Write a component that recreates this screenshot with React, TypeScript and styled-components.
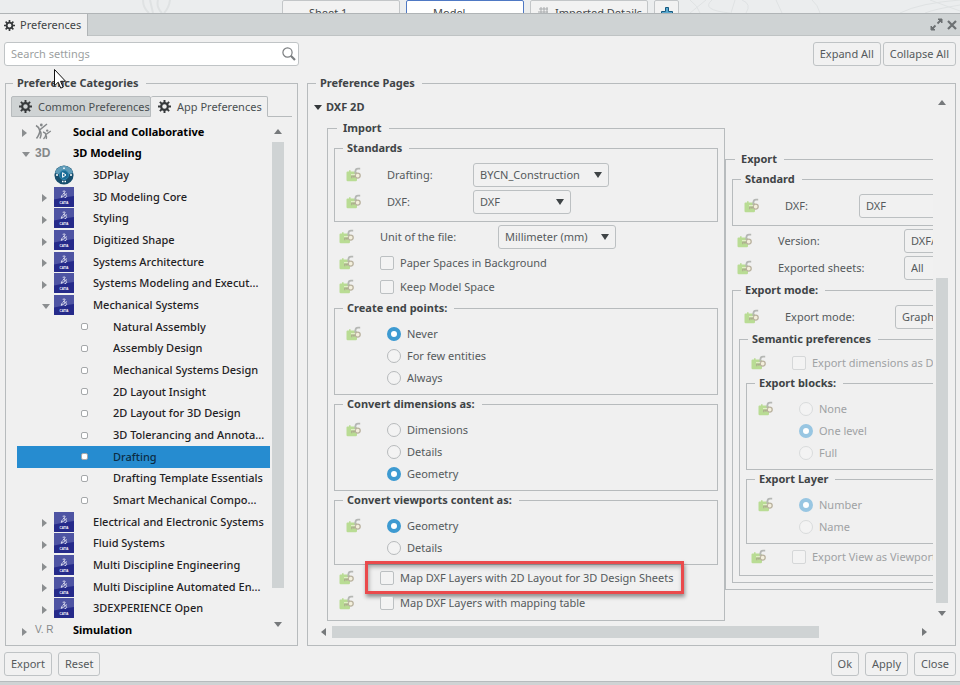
import React, { useId, useState } from "react";
import styled, { createGlobalStyle, css } from "styled-components";

const GlobalStyle = createGlobalStyle`
  *, *::before, *::after { box-sizing: border-box; }
  body {
    margin: 0;
    background: #f0f0f0;
    color: #555a5c;
    font: 11px/16px "Noto Sans", "Open Sans", sans-serif;
  }
  button, input, select { font: inherit; color: inherit; }
`;

const line = "#b7bbbd";
const bar = "#cfd3d4";

/* ---------- page frame ---------- */

const Page = styled.div`
  position: relative;
  display: flex;
  flex-direction: column;
  min-height: 100vh;
  overflow: hidden;
`;

const SheetStrip = styled.div`
  position: relative;
  display: flex;
  gap: 6px;
  height: 13px;
  padding-left: 282px;
  overflow: hidden;
  background: #ebedee;
`;

const Watermark = styled.svg`
  position: absolute;
  inset: 0;
  width: 100%;
  height: 13px;
`;

const SheetTab = styled.button<{ $active?: boolean; $small?: boolean }>`
  position: relative;
  display: flex;
  flex: none;
  align-items: center;
  justify-content: ${(p) => (p.$small ? "center" : "flex-start")};
  gap: 6px;
  width: ${(p) => (p.$small ? 25 : 118)}px;
  height: 25px;
  padding: 0 0 0 ${(p) => (p.$small ? 0 : 26)}px;
  border: 1px solid ${(p) => (p.$active ? "#4f79c4" : "#c3c6c8")};
  border-radius: 2px;
  background: ${(p) => (p.$active ? "#fff" : "#f2f2f2")};
  color: #44484a;
  white-space: nowrap;
`;

const IconTab = styled(SheetTab)`
  padding-left: 6px;
`;

const TitleBar = styled.header`
  display: flex;
  align-items: stretch;
  height: 23px;
  border-top: 1px solid #b0b4b6;
  border-bottom: 1px solid #bfc3c4;
  background: ${bar};
`;

const TitleTab = styled.h1`
  display: flex;
  align-items: center;
  gap: 5px;
  margin: 0 auto -1px 0;
  padding: 0 6px 0 4px;
  border-right: 1px solid #b0b4b6;
  background: #f0f0f0;
  font-size: 11px;
  font-weight: 400;
  color: #3f4446;
`;

const BarButton = styled.button`
  display: flex;
  align-items: center;
  justify-content: center;
  width: 16px;
  padding: 0;
  border: 0;
  background: none;
`;

const Toolbar = styled.div`
  display: flex;
  gap: 2px;
  padding: 6px 4px 8px;
`;

const SearchBox = styled.label`
  display: flex;
  align-items: center;
  flex: 0 1 295px;
  height: 24px;
  margin-right: auto;
  padding: 0 2px 0 6px;
  border: 1px solid #c0c4c6;
  border-radius: 3px;
  background: #fff;
`;

const SearchInput = styled.input`
  flex: 1;
  min-width: 0;
  padding: 0;
  border: 0;
  outline: 0;
  background: none;
  &::placeholder { color: #9c9fa1; opacity: 1; }
`;

const Button = styled.button`
  height: 24px;
  padding: 0 6px;
  border: 1px solid #bfc3c5;
  border-radius: 3px;
  background: #f1f1f1;
  white-space: nowrap;
`;

const Main = styled.main`
  display: grid;
  grid-template-columns: minmax(0, 293fr) minmax(0, 649fr);
  gap: 9px;
  flex: 1;
  padding: 0 4px 0 5px;
`;

const Footer = styled.footer`
  display: flex;
  gap: 6px;
  padding: 6px 4px;
  border-bottom: 3px solid ${bar};
  box-shadow: inset 0 -1px 0 #b7bbbd;
`;

const Spacer = styled.div`
  flex: 1;
`;

/* ---------- framed groups ---------- */

const Frame = styled.fieldset`
  display: flex;
  flex-direction: column;
  min-width: 0;
  margin: 0;
  padding: 0 6px 6px;
  border: 1px solid ${line};
`;

const Legend = styled.legend<{ $wide?: boolean }>`
  margin-left: ${(p) => (p.$wide ? 3 : 2)}px;
  padding: 0 7px 0 ${(p) => (p.$wide ? 6 : 4)}px;
  font-weight: 700;
  line-height: 18px;
  color: #3f4446;
`;

const CategoryFrame = styled(Frame)`
  padding: 4px 5px;
`;

const PagesFrame = styled(Frame)`
  padding: 0 7px 7px 6px;
`;

/* ---------- category tree ---------- */

const Tabs = styled.div`
  display: flex;
  height: 21px;
  &::after {
    content: "";
    flex: 1;
    border-bottom: 1px solid ${line};
  }
`;

const Tab = styled.button<{ $active?: boolean }>`
  display: flex;
  flex: none;
  align-items: center;
  gap: 6px;
  width: ${(p) => (p.$active ? 117 : 140)}px;
  padding: 0 0 0 7px;
  border: 1px solid ${line};
  border-left-width: ${(p) => (p.$active ? 0 : 1)}px;
  border-bottom-color: ${(p) => (p.$active ? "transparent" : line)};
  border-radius: 2px 2px 0 0;
  background: ${(p) => (p.$active ? "#f0f0f0" : bar)};
  color: #4a4f51;
  white-space: nowrap;
`;

const TreeArea = styled.div`
  display: flex;
  flex: 1;
  gap: 2px;
  padding: 4px 8px 0 6px;
`;

const Tree = styled.ul`
  display: grid;
  grid-auto-rows: minmax(20px, 1fr);
  flex: 1;
  min-width: 0;
  margin: 0;
  padding: 0;
  list-style: none;
`;

const TreeRow = styled.li<{ $level: number; $selected?: boolean }>`
  display: grid;
  grid-template-columns: ${(p) =>
    ["13px 40px", "14px 39px", "32px"][p.$level]} minmax(0, 1fr);
  align-items: center;
  padding-left: ${(p) => [3, 23, 64][p.$level]}px;
  overflow: hidden;
  background: ${(p) => (p.$selected ? "#268cd0" : "none")};
  color: ${(p) => (p.$selected ? "#0c2c44" : "#1f2224")};
  font-weight: 500;
  ${(p) => p.$level === 0 && css`font-weight: 700; color: #000;`}
`;

const TreeText = styled.span`
  overflow: hidden;
  text-overflow: ellipsis;
  white-space: nowrap;
`;

const TreeIcon = styled.span<{ $arrow?: boolean; $inset?: boolean }>`
  display: flex;
  align-items: center;
  padding-top: ${(p) => (p.$arrow ? 3 : 0)}px;
  margin-left: ${(p) => (p.$arrow || p.$inset ? 2 : 0)}px;
`;

const Leaf = styled.span`
  width: 7px;
  height: 7px;
  border: 1px solid #a5a8aa;
  border-radius: 2px;
  background: #fff;
`;

/* ---------- scroll bars ---------- */

const ScrollBar = styled.div<{ $across?: boolean; $end?: number }>`
  display: flex;
  flex-direction: ${(p) => (p.$across ? "row" : "column")};
  flex: none;
  width: ${(p) => (p.$across ? "auto" : "12px")};
  height: ${(p) => (p.$across ? "12px" : "auto")};
  padding-bottom: ${(p) => p.$end ?? 0}px;
`;

const ScrollButton = styled.button<{ $across?: boolean }>`
  display: flex;
  align-items: center;
  justify-content: center;
  flex: 0 0 ${(p) => (p.$across ? 18 : 21)}px;
  padding: 0;
  border: 0;
  background: none;
`;

const Thumb = styled.div<{ $size: number }>`
  flex: ${(p) => p.$size} 1 0;
  background: ${bar};
`;

const Gap = styled.div<{ $size: number }>`
  flex: ${(p) => p.$size} 1 0;
`;

/* ---------- preference page ---------- */

const PagesGrid = styled.div`
  display: grid;
  grid-template-columns: minmax(0, 1fr) 12px;
  grid-template-rows: minmax(0, 1fr) 12px;
  gap: 2px 3px;
  flex: 1;
`;

const Viewport = styled.div`
  min-width: 0;
  overflow: hidden;
`;

const SectionTitle = styled.h2`
  display: flex;
  align-items: center;
  gap: 4px;
  height: 24px;
  margin: 3px 0 0;
  font-size: 11px;
  font-weight: 700;
  color: #3f4446;
`;

const Columns = styled.div`
  display: grid;
  grid-template-columns: 398px 345px;
  align-items: start;
  padding-left: 13px;
`;

const ImportFrame = styled(Frame)`
  padding: 2px 6px 5px;
`;

const ExportFrame = styled(Frame)`
  margin-top: 31px;
  padding-top: 2px;
`;

const FieldFrame = styled(Frame)`
  padding: 4px 6px 6px;
`;

const RadioFrame = styled(Frame)`
  padding: 6px 6px 5px;
`;

const OpenFrame = styled(Frame)`
  padding-top: 4px;
`;

const Row = styled.div<{ $h: number }>`
  display: flex;
  align-items: center;
  height: ${(p) => p.$h}px;
  padding-left: 5px;
  white-space: nowrap;
`;

const LockSlot = styled.span`
  display: flex;
  flex: 0 0 41px;
`;

const FieldLabel = styled.label<{ $w: number }>`
  flex: 0 0 ${(p) => p.$w}px;
`;

const Dropdown = styled.span<{ $w: number }>`
  position: relative;
  display: flex;
  flex: 0 0 ${(p) => p.$w}px;
`;

const SelectBox = styled.select`
  appearance: none;
  width: 100%;
  height: 24px;
  padding: 1px 20px 0 6px;
  border: 1px solid #bcc0c2;
  border-radius: 3px;
  background: #f1f1f1;
`;

const DropMark = styled.svg`
  position: absolute;
  right: 7px;
  top: 9px;
  pointer-events: none;
`;

const Choice = styled.label`
  position: relative;
  display: flex;
  align-items: center;
  gap: 6px;
  &:has(input:disabled) { color: #9fa2a4; }
`;

const Check = styled.input`
  appearance: none;
  width: 14px;
  height: 14px;
  margin: 0;
  border: 1px solid #bcc0c2;
  border-radius: 2px;
  background: #f3f3f3;
  &:checked { background: #3d9ad1; }
  &:disabled { border-color: #d5d7d8; }
`;

const Radio = styled.input`
  appearance: none;
  width: 14px;
  height: 14px;
  margin: 0;
  border: 1px solid #b7babc;
  border-radius: 50%;
  background: #f3f3f3;
  &:checked { border: 4px solid #3d9ad1; background: #fff; }
  &:disabled { border-color: #d9dbdc; }
  &:disabled:checked { border-color: #98c6e2; }
`;

const Highlight = styled.span`
  position: absolute;
  inset: -9px -11px -8px -15px;
  border: 3px solid #ea4a4c;
  box-shadow: 1px 3px 4px rgba(0, 0, 0, 0.4), inset 1px 3px 4px rgba(0, 0, 0, 0.3);
  pointer-events: none;
`;

const After = styled.div`
  margin-top: 1px;
`;

const Pointer = styled.svg`
  position: absolute;
  left: 53px;
  top: 68px;
  pointer-events: none;
`;

/* ---------- drawings ---------- */

const Gear = ({ size = 12 }: { size?: number }) => (
  <svg width={size} height={size} viewBox="0 0 24 24" fill="none" stroke="#36393b" aria-hidden>
    <circle cx="12" cy="12" r="6.200" strokeWidth="4" />
    <g strokeWidth="3.600">
      <path d="M12 0v5M12 19v5M0 12h5M19 12h5M3.500 3.500l3.600 3.600M16.900 16.900l3.600 3.600M20.500 3.500l-3.600 3.600M7.100 16.900l-3.600 3.600" />
    </g>
  </svg>
);

const marks = {
  up: "0,5 4,0 8,5",
  down: "0,0 8,0 4,5",
  left: "5,0 0,4 5,8",
  right: "0,0 5,4 0,8",
};

const Mark = ({ dir, color = "#76797b" }: { dir: keyof typeof marks; color?: string }) => {
  const tall = dir === "left" || dir === "right";
  return (
    <svg width={tall ? 5 : 8} height={tall ? 8 : 5} aria-hidden>
      <polygon points={marks[dir]} fill={color} />
    </svg>
  );
};

const Lock = () => (
  <svg width="16" height="16" viewBox="0 0 16 16" fill="none" aria-hidden>
    <path d="M0.500 5.500q0-1 1-1h1.500v-1.200h1.600v1.200h5l1.400 1v7.500q0 1.200-1.200 1.200H1.700q-1.200 0-1.200-1.200z" fill="#b9dc94" />
    <path d="M9.400 7V4.200Q9.600 1.600 12 1.600h2.200" stroke="#b5b7b4" strokeWidth="1.800" />
    <circle cx="11.700" cy="8.600" r="2.500" fill="#f3efdc" stroke="#b9b29f" strokeWidth="1.300" />
    <path d="M9.500 9H5.200M5.800 9v2.200M7.900 9v1.800" stroke="#aaa68c" strokeWidth="1.100" />
    <path d="M5 7.700h4.200" stroke="#eaf3d2" strokeWidth="1" />
  </svg>
);

const Catia = () => (
  <svg width="20" height="20" viewBox="0 0 20 20" aria-hidden>
    <rect width="20" height="20" rx="0.500" fill="#252a8a" />
    <path d="M0 0h20v9Q10 10 0 12.500z" fill="#4e54a3" />
    <g fill="none" stroke="#e6e7f4" strokeWidth="0.900">
      <path d="M8.700 4.300q3-.9 2.400.5-.4 1-1.900 1.700 2.300-.3 1.600 1.400-.7 1.500-3.600 2.500.2-1.700 1.600-3" />
      <path d="M12.900 6.800q-1.700 0-1.300 1 .9 1 1 1.700-.2 1.200-2 1" />
    </g>
    <text x="10" y="17" textAnchor="middle" fill="#fff" fontSize="3" fontWeight="700" fontFamily="Liberation Sans, sans-serif">CATIA</text>
  </svg>
);

const Play = () => (
  <svg width="20" height="20" viewBox="0 0 20 20" aria-hidden>
    <circle cx="10" cy="10" r="9.600" fill="#174e6d" />
    <path d="M1 8a9.200 9.200 0 0 1 18 0Q10 12 1 8z" fill="#5e9bb8" />
    <circle cx="10" cy="10" r="4.600" fill="#1a6c96" stroke="#2f86ad" />
    <path d="M8.600 7.700v4.600l3.400-2.300z" fill="none" stroke="#fff" />
    <path d="M2 10h2M16 10h2M8 16.500h1.500M10.500 16.500H12M10 2.500v1.500" stroke="#fff" strokeWidth="1.500" />
  </svg>
);

const People = () => (
  <svg width="17" height="17" viewBox="0 0 17 17" fill="none" stroke="#85888a" aria-hidden>
    <path d="M1 2.500q3 1.500 3.500 4.500L12 1M4.800 6.500q.5 4-3.300 9M5 8q2.200 2.500 0 7.500" strokeWidth="1.500" />
    <path d="M8 9q2.500.5 2.800 2.500l5-3.500M10.800 11.500q0 2-2.300 4.500M11 12q1 1.500.2 4" strokeWidth="1.300" />
    <circle cx="6.300" cy="2" r="1.400" fill="#85888a" stroke="none" />
    <circle cx="12.200" cy="7.600" r="1.200" fill="#85888a" stroke="none" />
  </svg>
);

const IconWord = styled.span`
  color: #85888a;
  font: 700 12px/14px "Liberation Sans Narrow", "Liberation Sans", sans-serif;
  white-space: nowrap;
`;

const FadedWord = styled(IconWord)`
  font-size: 10px;
  font-weight: 400;
`;

/* ---------- data ---------- */

type Node = {
  text: string;
  level: 0 | 1 | 2;
  open?: boolean;
  icon?: React.ReactNode;
  noArrow?: boolean;
};

const nodes: Node[] = [
  { text: "Social and Collaborative", level: 0, icon: <People /> },
  { text: "3D Modeling", level: 0, open: true, icon: <IconWord>3D</IconWord> },
  { text: "3DPlay", level: 1, icon: <Play />, noArrow: true },
  { text: "3D Modeling Core", level: 1 },
  { text: "Styling", level: 1 },
  { text: "Digitized Shape", level: 1 },
  { text: "Systems Architecture", level: 1 },
  { text: "Systems Modeling and Execut...", level: 1 },
  { text: "Mechanical Systems", level: 1, open: true },
  { text: "Natural Assembly", level: 2 },
  { text: "Assembly Design", level: 2 },
  { text: "Mechanical Systems Design", level: 2 },
  { text: "2D Layout Insight", level: 2 },
  { text: "2D Layout for 3D Design", level: 2 },
  { text: "3D Tolerancing and Annota...", level: 2 },
  { text: "Drafting", level: 2 },
  { text: "Drafting Template Essentials", level: 2 },
  { text: "Smart Mechanical Compo...", level: 2 },
  { text: "Electrical and Electronic Systems", level: 1 },
  { text: "Fluid Systems", level: 1 },
  { text: "Multi Discipline Engineering", level: 1 },
  { text: "Multi Discipline Automated En...", level: 1 },
  { text: "3DEXPERIENCE Open", level: 1 },
  { text: "Simulation", level: 0, icon: <FadedWord>V. R</FadedWord> },
];

/* ---------- parts ---------- */

const SelectRow = ({ label, labelWidth, value, width, h = 27 }: {
  label: string; labelWidth: number; value: string; width: number; h?: number;
}) => {
  const id = useId();
  return (
    <Row $h={h}>
      <LockSlot><Lock /></LockSlot>
      <FieldLabel htmlFor={id} $w={labelWidth}>{label}</FieldLabel>
      <Dropdown $w={width}>
        <SelectBox id={id} defaultValue={value}><option>{value}</option></SelectBox>
        <DropMark width="8" height="6" aria-hidden><polygon points="0,0 8,0 4,6" fill="#3f4446" /></DropMark>
      </Dropdown>
    </Row>
  );
};

const CheckRow = ({ label, h = 24, disabled, highlight }: {
  label: string; h?: number; disabled?: boolean; highlight?: boolean;
}) => (
  <Row $h={h}>
    <LockSlot><Lock /></LockSlot>
    <Choice>
      <Check type="checkbox" disabled={disabled} />
      {label}
      {highlight && <Highlight />}
    </Choice>
  </Row>
);

const RadioGroup = ({ title, options, value, disabled }: {
  title: string; options: string[]; value: string; disabled?: boolean;
}) => {
  const name = useId();
  const [picked, setPicked] = useState(value);
  return (
    <RadioFrame>
      <Legend>{title}</Legend>
      {options.map((option, i) => (
        <Row $h={22} key={option}>
          <LockSlot>{i === 0 && <Lock />}</LockSlot>
          <Choice>
            <Radio type="radio" name={name} checked={picked === option} disabled={disabled} onChange={() => setPicked(option)} />
            {option}
          </Choice>
        </Row>
      ))}
    </RadioFrame>
  );
};

const Categories = () => {
  const [selected, setSelected] = useState("Drafting");
  return (
    <CategoryFrame>
      <Legend>Preference Categories</Legend>
      <Tabs role="tablist">
        <Tab role="tab" aria-selected={false}><Gear size={13} />Common Preferences</Tab>
        <Tab role="tab" aria-selected $active><Gear size={13} />App Preferences</Tab>
      </Tabs>
      <TreeArea>
        <Tree role="tree">
          {nodes.map((n) => (
            <TreeRow key={n.text} role="treeitem" aria-selected={selected === n.text} $level={n.level} $selected={selected === n.text} onClick={() => setSelected(n.text)}>
              {n.level < 2 && (
                <TreeIcon $arrow>{!n.noArrow && <Mark dir={n.open ? "down" : "right"} color="#8b8e90" />}</TreeIcon>
              )}
              {n.level === 2 ? <Leaf /> : <TreeIcon $inset={n.level === 0}>{n.icon ?? <Catia />}</TreeIcon>}
              <TreeText>{n.text}</TreeText>
            </TreeRow>
          ))}
        </Tree>
        <ScrollBar $end={6}>
          <ScrollButton aria-label="Scroll up"><Mark dir="up" /></ScrollButton>
          <Thumb $size={446} />
          <Gap $size={26} />
          <ScrollButton aria-label="Scroll down"><Mark dir="down" /></ScrollButton>
        </ScrollBar>
      </TreeArea>
    </CategoryFrame>
  );
};

const ImportGroup = () => (
  <ImportFrame>
    <Legend $wide>Import</Legend>
    <FieldFrame>
      <Legend>Standards</Legend>
      <SelectRow label="Drafting:" labelWidth={86} value="BYCN_Construction" width={136} />
      <SelectRow label="DXF:" labelWidth={86} value="DXF" width={98} />
    </FieldFrame>
    <SelectRow label="Unit of the file:" labelWidth={118} value="Millimeter (mm)" width={118} h={29} />
    <CheckRow label="Paper Spaces in Background" />
    <CheckRow label="Keep Model Space" />
    <RadioGroup title="Create end points:" options={["Never", "For few entities", "Always"]} value="Never" />
    <RadioGroup title="Convert dimensions as:" options={["Dimensions", "Details", "Geometry"]} value="Geometry" />
    <RadioGroup title="Convert viewports content as:" options={["Geometry", "Details"]} value="Geometry" />
    <CheckRow label="Map DXF Layers with 2D Layout for 3D Design Sheets" h={25} highlight />
    <CheckRow label="Map DXF Layers with mapping table" h={25} />
  </ImportFrame>
);

const ExportGroup = () => (
  <ExportFrame>
    <Legend $wide>Export</Legend>
    <FieldFrame>
      <Legend>Standard</Legend>
      <SelectRow label="DXF:" labelWidth={74} value="DXF" width={98} />
    </FieldFrame>
    <After>
      <SelectRow label="Version:" labelWidth={126} value="DXF/DWG 2013" width={120} />
      <SelectRow label="Exported sheets:" labelWidth={126} value="All" width={90} />
    </After>
    <OpenFrame>
      <Legend>Export mode:</Legend>
      <SelectRow label="Export mode:" labelWidth={110} value="Graphic" width={110} />
      <OpenFrame>
        <Legend>Semantic preferences</Legend>
        <CheckRow label="Export dimensions as Dimensions" h={22} disabled />
        <RadioGroup title="Export blocks:" options={["None", "One level", "Full"]} value="One level" disabled />
        <RadioGroup title="Export Layer" options={["Number", "Name"]} value="Number" disabled />
        <CheckRow label="Export View as Viewport" h={25} disabled />
      </OpenFrame>
    </OpenFrame>
  </ExportFrame>
);

export default function App() {
  return (
    <Page>
      <GlobalStyle />
      <SheetStrip>
        <Watermark fill="none" stroke="#dfe2e3" strokeWidth="1" aria-hidden>
          <path d="M143 0q0 8 6 13M150 0l3 13M158 0q-2 7 4 13M170 0q-1 8-6 13" strokeWidth="2" />
          <path d="M690 0q8 6 10 13M706 0l-16 13M712 0q-12 10 18 13M735 0l-4 13M742 0q10 4 4 13M776 0l6 13M812 0q6 5 8 13M900 13q20-10 60-13M925 13q10-4 35-8M930 0l30 11" />
        </Watermark>
        <SheetTab>Sheet 1</SheetTab>
        <SheetTab $active>Model</SheetTab>
        <IconTab>
          <svg width="12" height="12" viewBox="0 0 12 12" fill="none" stroke="#a8abad" aria-hidden>
            <path d="M2 2h9M1 5h10M0 8h10M4 0v11M7 0v11M10 0v9" />
          </svg>
          Imported Details
        </IconTab>
        <SheetTab $small aria-label="Add sheet">
          <svg width="12" height="12" viewBox="0 0 12 12" aria-hidden>
            <path d="M4.500.5h3v4h4v3h-4v4h-3v-4h-4v-3h4z" fill="#5aa9d0" stroke="#175a80" />
          </svg>
        </SheetTab>
      </SheetStrip>
      <TitleBar>
        <TitleTab><Gear size={11} />Preferences</TitleTab>
        <BarButton aria-label="Maximize">
          <svg width="13" height="13" viewBox="0 0 13 13" fill="#6c7072" stroke="#6c7072" aria-hidden>
            <path d="M8 1h4v4zM1 8v4h4z" />
            <path d="M10.500 2.500L7.500 5.500M5.500 7.500L2.500 10.500" strokeWidth="1.800" />
          </svg>
        </BarButton>
        <BarButton aria-label="Close window">
          <svg width="10" height="10" viewBox="0 0 10 10" stroke="#6c7072" strokeWidth="2.200" aria-hidden>
            <path d="M1 1l8 8M9 1L1 9" />
          </svg>
        </BarButton>
      </TitleBar>
      <Toolbar>
        <SearchBox>
          <SearchInput type="text" placeholder="Search settings" aria-label="Search settings" />
          <svg width="14" height="14" viewBox="0 0 14 14" fill="none" stroke="#7b7e80" aria-hidden>
            <circle cx="5.500" cy="5.500" r="4.600" strokeWidth="1.200" />
            <path d="M8.800 8.800l4.200 4.200" strokeWidth="2.200" />
          </svg>
        </SearchBox>
        <Button>Expand All</Button>
        <Button>Collapse All</Button>
      </Toolbar>
      <Main>
        <Categories />
        <PagesFrame>
          <Legend>Preference Pages</Legend>
          <PagesGrid>
            <Viewport>
              <SectionTitle><Mark dir="down" color="#33373a" />DXF 2D</SectionTitle>
              <Columns>
                <ImportGroup />
                <ExportGroup />
              </Columns>
            </Viewport>
            <ScrollBar>
              <ScrollButton aria-label="Scroll page up"><Mark dir="up" /></ScrollButton>
              <Gap $size={165} />
              <Thumb $size={325} />
              <ScrollButton aria-label="Scroll page down"><Mark dir="down" /></ScrollButton>
            </ScrollBar>
            <ScrollBar $across>
              <ScrollButton $across aria-label="Scroll page left"><Mark dir="left" /></ScrollButton>
              <Thumb $size={488} />
              <Gap $size={96} />
              <ScrollButton $across aria-label="Scroll page right"><Mark dir="right" /></ScrollButton>
            </ScrollBar>
          </PagesGrid>
        </PagesFrame>
      </Main>
      <Footer>
        <Button>Export</Button>
        <Button>Reset</Button>
        <Spacer />
        <Button>Ok</Button>
        <Button>Apply</Button>
        <Button>Close</Button>
      </Footer>
      <Pointer width="14" height="23" viewBox="0 0 14 23" aria-hidden>
        <path d="M1.500 1.500v16.200l3.700-3.500 2.500 5.900 2.400-1-2.500-5.800h5z" fill="#fff" stroke="#111" />
      </Pointer>
    </Page>
  );
}
